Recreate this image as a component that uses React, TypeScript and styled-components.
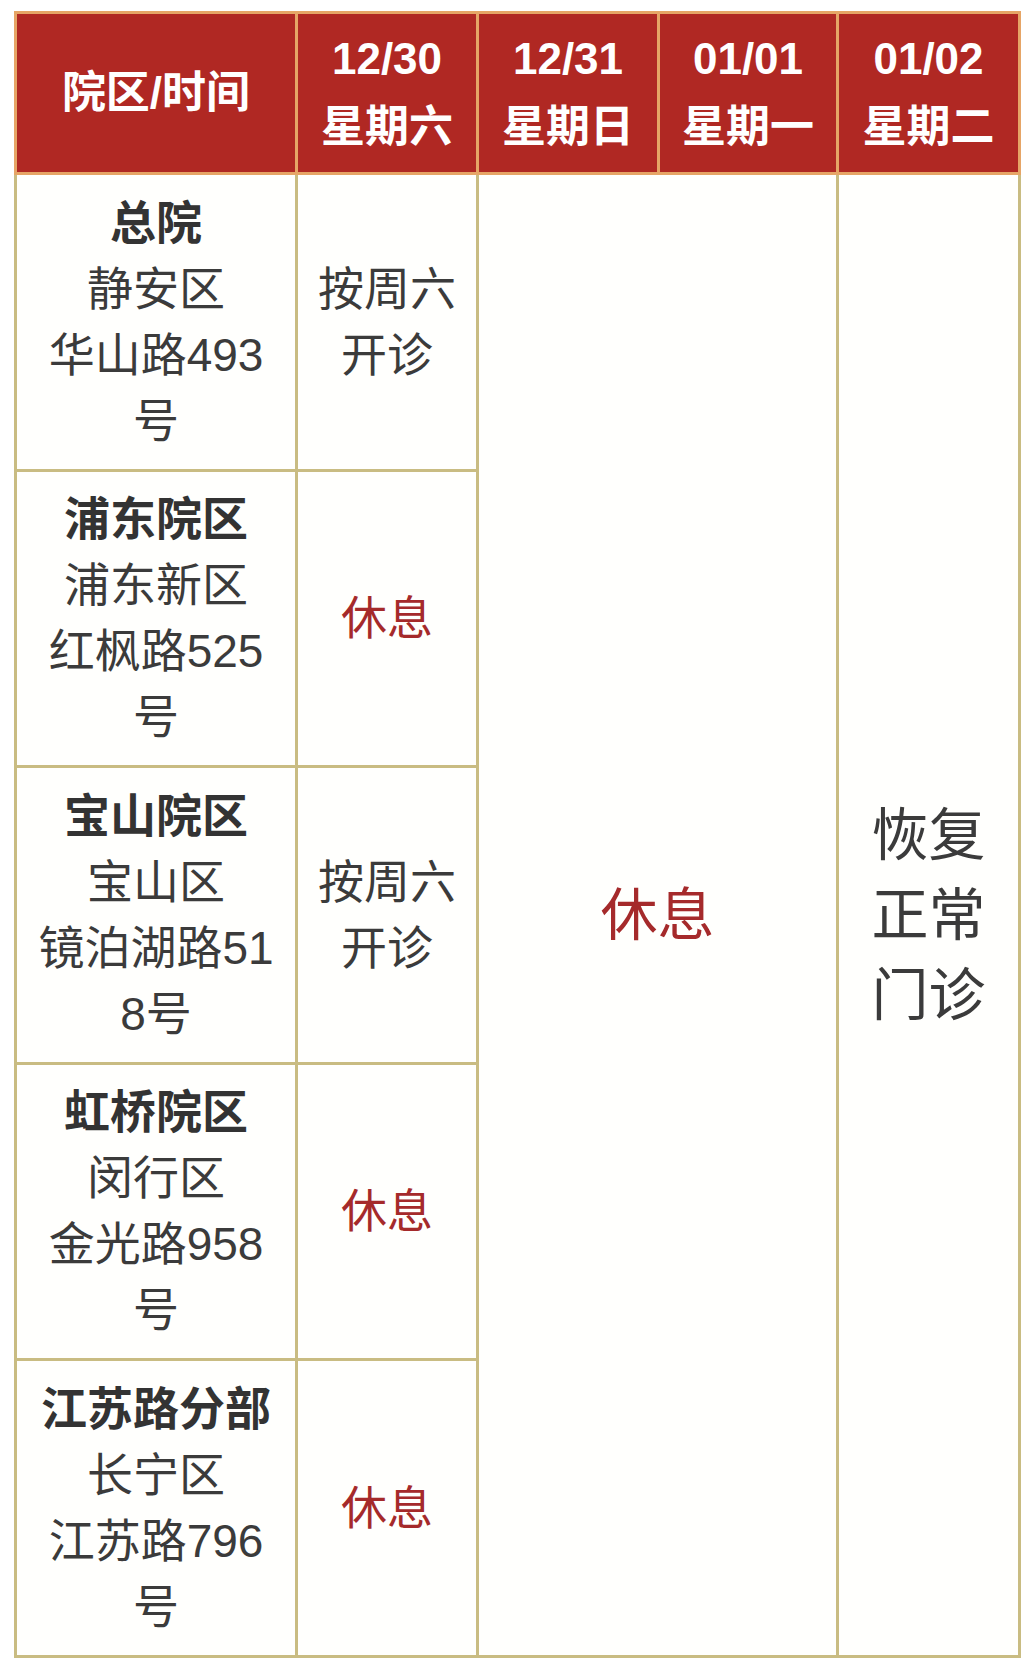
import styled, { createGlobalStyle } from "styled-components";

const GlobalStyle = createGlobalStyle`
  body {
    margin: 0;
    background: #ffffff;
    font-family: "Liberation Sans", "Noto Sans CJK SC", sans-serif;
  }
`;

const Page = styled.div`
  padding: 11px 0 0 14px;
`;

const Schedule = styled.table`
  border-collapse: collapse;
  table-layout: fixed;
  width: 1004px;
  background: #fffffd;
`;

const Column = styled.col<{ $w: number }>`
  width: ${(p) => p.$w}px;
`;

const HeadCell = styled.th`
  height: 158px;
  padding: 0 4px;
  background: #b02823;
  border: 3px solid #e6a566;
  color: #ffffff;
  font-size: 44px;
  font-weight: 700;
  line-height: 68px;
  text-align: center;
  vertical-align: middle;
`;

const Cell = styled.td<{ $big?: boolean; $red?: boolean }>`
  height: 293.5px;
  padding: 0 ${(p) => (p.$big ? "26px" : "12px")};
  border: 3px solid #c9bc82;
  color: ${(p) => (p.$red ? "#a52a2b" : "#3b3b3b")};
  font-size: ${(p) => (p.$big ? "57px" : "46px")};
  line-height: ${(p) => (p.$big ? "80px" : "66px")};
  text-align: center;
  vertical-align: middle;
  word-break: break-all;
`;

const Name = styled.div`
  font-weight: 700;
  color: #333333;
`;

const widths = [281, 181, 181, 179, 182];

const campuses = [
  { name: "总院", district: "静安区", address: "华山路493号", sat: "按周六开诊" },
  { name: "浦东院区", district: "浦东新区", address: "红枫路525号", sat: "休息" },
  { name: "宝山院区", district: "宝山区", address: "镜泊湖路518号", sat: "按周六开诊" },
  { name: "虹桥院区", district: "闵行区", address: "金光路958号", sat: "休息" },
  { name: "江苏路分部", district: "长宁区", address: "江苏路796号", sat: "休息" },
];

const days = [
  { date: "12/30", week: "星期六" },
  { date: "12/31", week: "星期日" },
  { date: "01/01", week: "星期一" },
  { date: "01/02", week: "星期二" },
];

export default function App() {
  return (
    <Page>
      <GlobalStyle />
      <Schedule>
        <colgroup>
          {widths.map((w, i) => (
            <Column key={i} $w={w} />
          ))}
        </colgroup>
        <thead>
          <tr>
            <HeadCell>院区/时间</HeadCell>
            {days.map((d) => (
              <HeadCell key={d.date}>
                {d.date}
                <br />
                {d.week}
              </HeadCell>
            ))}
          </tr>
        </thead>
        <tbody>
          {campuses.map((c, i) => (
            <tr key={c.name}>
              <Cell>
                <Name>{c.name}</Name>
                <div>{c.district}</div>
                <div>{c.address}</div>
              </Cell>
              <Cell $red={c.sat === "休息"}>{c.sat}</Cell>
              {i === 0 && (
                <>
                  <Cell colSpan={2} rowSpan={5} $big $red>
                    休息
                  </Cell>
                  <Cell rowSpan={5} $big>
                    恢复正常门诊
                  </Cell>
                </>
              )}
            </tr>
          ))}
        </tbody>
      </Schedule>
    </Page>
  );
}
